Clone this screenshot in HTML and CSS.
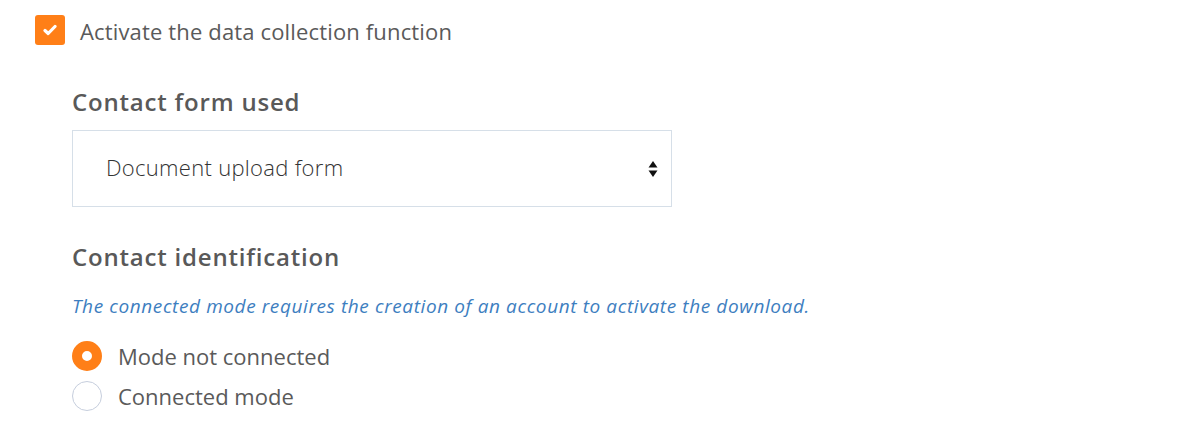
FILE: index.html
```html
<!DOCTYPE html>
<html lang="en">
<head>
<meta charset="utf-8">
<link rel="stylesheet" href="styles.css">
</head>
<body>
<div class="page">
  <label class="check-row">
    <span class="checkbox">
      <svg width="14" height="12" viewBox="0 0 14 12"><path d="M2 6.5 L5.2 9.5 L12 2.5" fill="none" stroke="#fff" stroke-width="3.2" stroke-linecap="round" stroke-linejoin="round"/></svg>
    </span>
    <span class="check-label">Activate the data collection function</span>
  </label>

  <div class="section">
    <h2 class="heading heading-form">Contact form used</h2>
    <div class="select">
      <span class="select-value">Document upload form</span>
      <svg class="select-arrows" width="10" height="18" viewBox="0 0 10 18"><path d="M5 1 L9.5 7.5 H0.5 Z" fill="#111"/><path d="M5 17 L9.5 10.5 H0.5 Z" fill="#111"/></svg>
    </div>

    <h2 class="heading heading-id">Contact identification</h2>
    <p class="hint">The connected mode requires the creation of an account to activate the download.</p>

    <div class="radios">
      <label class="radio-row">
        <span class="radio radio-on"></span>
        <span class="radio-label">Mode not connected</span>
      </label>
      <label class="radio-row">
        <span class="radio"></span>
        <span class="radio-label">Connected mode</span>
      </label>
    </div>
  </div>
</div>
</body>
</html>
```
FILE: styles.css
```css
html, body {
  margin: 0;
  padding: 0;
  background: #fff;
}
body {
  font-family: "Open Sans", Lato, sans-serif;
  color: #555;
}
.page {
  padding: 15px 0 0 35px;
}
.check-row {
  display: flex;
  align-items: center;
  gap: 15px;
  height: 30px;
}
.checkbox {
  width: 30px;
  height: 30px;
  border-radius: 3px;
  background: #ff7f17;
  display: flex;
  align-items: center;
  justify-content: center;
}
.check-label {
  font-size: 22px;
  letter-spacing: 0.15px;
  color: #5a5a5a;
  margin-top: 1px;
}
.section {
  padding-left: 37px;
}
.heading {
  margin: 0;
  font-size: 24px;
  font-weight: 600;
  letter-spacing: 0.8px;
  color: #595959;
  line-height: 30px;
}
.heading-form {
  margin-top: 42px;
}
.select {
  margin-top: 13px;
  width: 600px;
  height: 77px;
  box-sizing: border-box;
  border: 1px solid #d6dfe8;
  display: flex;
  align-items: center;
  justify-content: space-between;
  padding: 0 13px 0 33px;
}
.select-value {
  font-size: 22px;
  letter-spacing: 0.3px;
  font-family: "Open Sans", sans-serif;
  color: #333;
  font-weight: 300;
  margin-top: -3px;
}
.heading-id {
  margin-top: 35px;
}
.hint {
  margin: 22px 0 0;
  font-size: 19px;
  letter-spacing: 0.6px;
  font-style: italic;
  color: #3d7ebf;
  line-height: 24px;
}
.radios {
  margin-top: 23px;
  display: flex;
  flex-direction: column;
  gap: 10px;
}
.radio-row {
  display: flex;
  align-items: center;
  gap: 16px;
  height: 30px;
}
.radio {
  width: 30px;
  height: 30px;
  box-sizing: border-box;
  border-radius: 50%;
  border: 1px solid #c6cedd;
  background: #fff;
}
.radio-on {
  border: 10px solid #ff7f17;
}
.radio-label {
  font-size: 22px;
  color: #5a5a5a;
}
```
